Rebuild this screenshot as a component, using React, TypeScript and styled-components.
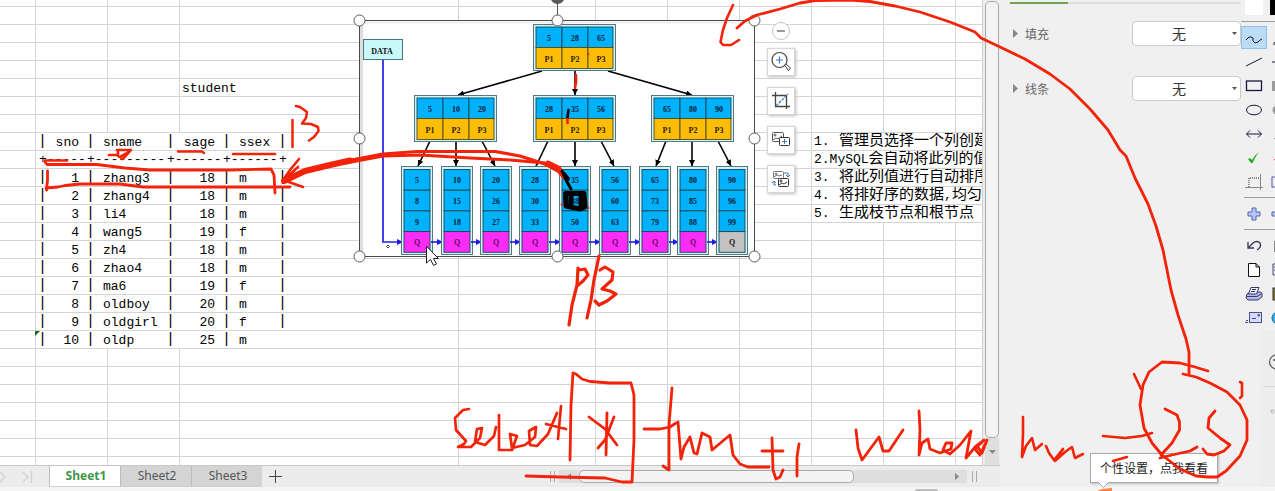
import React from "react";
import styled, { createGlobalStyle } from "styled-components";

const GlobalStyle = createGlobalStyle`
  * { box-sizing: border-box; }
  body { margin: 0; background: #f0f0f0; font-family: "Noto Sans", "Noto Sans CJK SC", sans-serif; }
  button { padding: 0; border: 0; background: none; font: inherit; color: inherit; cursor: pointer; }
  svg { display: block; }
`;

const INK = "#f22308";

const Page = styled.div`
  position: relative;
  display: flex;
  flex-direction: column;
  overflow: hidden;
`;
const Main = styled.div`
  display: flex;
`;
const Workbook = styled.main`
  flex: 1;
  min-width: 0;
`;
const SheetArea = styled.div`
  display: flex;
`;
const Sheet = styled.section`
  position: relative;
  flex: 1;
  min-width: 0;
  overflow: hidden;
  background: #fff;
  border-right: 1px solid #d0d0d0;
`;
const Grid = styled.table`
  width: 100%;
  table-layout: fixed;
  border-spacing: 0;
`;
const Row = styled.tr<{ $h?: number }>`
  height: ${(p) => p.$h ?? 18}px;
`;
const Cell = styled.td<{ $flush?: boolean; $last?: boolean }>`
  padding: 0;
  overflow: hidden;
  white-space: nowrap;
  vertical-align: top;
  font: 13px "Liberation Mono", "Noto Sans CJK SC", monospace;
  line-height: 14px;
  color: #000;
  border-right: ${(p) => (p.$flush ? 0 : 1)}px solid #d4d4d4;
  border-bottom: ${(p) => (p.$last ? 0 : 1)}px solid #d4d4d4;
`;
const CellText = styled.div`
  height: 17px;
  padding: 3px 0 0 2px;
`;
const Record = styled.div`
  display: grid;
  grid-template-columns: 48px 80px 56px 56px 9px;
  height: 17px;
  padding: 3px 0 0 2px;
`;
const Field = styled.span<{ $right?: boolean }>`
  display: flex;
  justify-content: ${(p) => (p.$right ? "space-between" : "flex-start")};
  gap: 8px;
  padding-right: 7px;
`;
const Pipe = styled.span`
  flex: none;
  width: 9px;
  font-size: 15px;
  line-height: 12px;
`;
const Rule = styled.span`
  padding-left: 1px;
  line-height: 12px;
`;
const Note = styled.div`
  display: flex;
  height: 17px;
  padding-left: 2px;
  font-size: 15px;
  line-height: 17px;
`;
const Latin = styled.span<{ $wide?: boolean }>`
  flex: none;
  min-width: ${(p) => (p.$wide ? 25 : 8)}px;
  font-size: 13px;
  line-height: 18px;
`;

const VScroll = styled.div`
  display: flex;
  flex-direction: column;
  width: 17px;
  padding: 1px 1px 0 2px;
  background: #ededed;
`;
const VThumb = styled.div`
  flex: 1;
  border: 1px solid #a9a9a9;
  border-radius: 5px;
  background: #f3f3f3;
`;
const ScrollButton = styled.button<{ $tall?: boolean }>`
  display: flex;
  align-items: center;
  justify-content: center;
  width: ${(p) => (p.$tall ? "auto" : "20px")};
  height: ${(p) => (p.$tall ? 27 : 13)}px;
  background: #dedede;
`;
const TabBar = styled.div`
  display: flex;
  height: 22px;
  background: #ececec;
  border-top: 1px solid #c9c9c9;
`;
const TabNav = styled.div`
  display: flex;
  align-items: center;
  width: 49px;
`;
const Tab = styled.button<{ $active?: boolean }>`
  width: 71px;
  height: 21px;
  padding-left: 2px;
  border-left: 1px solid #bcbcbc;
  border-bottom: 1px solid #cfcfcf;
  background: ${(p) => (p.$active ? "#fff" : "#d4d4d4")};
  color: ${(p) => (p.$active ? "#40954a" : "#555")};
  font-size: 12px;
  line-height: 20px;
  font-weight: ${(p) => (p.$active ? 700 : 400)};
`;
const AddTab = styled.button`
  width: 26px;
  display: flex;
  align-items: center;
  justify-content: center;
`;
const Spacer = styled.div`
  width: 257px;
`;
const Splitter = styled.div`
  width: 5px;
  height: 11px;
  margin: 5px 4px 0 5px;
  border-left: 1px solid #aaa;
  border-right: 1px solid #aaa;
`;
const HTrack = styled.div`
  display: flex;
  flex: 1;
  height: 13px;
  margin-top: 4px;
  background: #dedede;
`;
const HThumb = styled.div`
  width: 275px;
  border: 1px solid #a9a9a9;
  border-radius: 5px;
  background: #f3f3f3;
`;
const HRest = styled.div`
  flex: 1;
`;
const TabEnd = styled.div`
  width: 33px;
`;

const Picture = styled.svg`
  position: absolute;
  left: 350px;
  top: 0;
`;
const FloatTools = styled.div`
  position: absolute;
  left: 767px;
  top: 22px;
  display: flex;
  flex-direction: column;
  align-items: center;
  gap: 11px;
`;
const Collapse = styled.button`
  width: 18px;
  height: 18px;
  margin-bottom: -3px;
`;
const FloatButton = styled.button`
  display: flex;
  align-items: center;
  justify-content: center;
  width: 28px;
  height: 28px;
  background: #fff;
  border: 1px solid #d6d6d6;
  box-shadow: 1px 1px 3px #bbb;
`;

const Side = styled.aside`
  display: flex;
  width: 275px;
  background: #f0f0f0;
`;
const Props = styled.div`
  flex: 1;
  padding: 2px 0 0 10px;
`;
const PropTabs = styled.div`
  height: 2px;
  margin-bottom: 17px;
  background: linear-gradient(90deg, #6fa350 58px, #dedede 58px);
`;
const PropRow = styled.div`
  display: flex;
  align-items: center;
  height: 25px;
  margin-bottom: 30px;
  padding-left: 3px;
  color: #666;
  font-size: 12px;
`;
const PropLabel = styled.label`
  flex: 1;
  margin-left: 7px;
`;
const SelectBox = styled.div`
  position: relative;
  width: 109px;
`;
const Select = styled.select`
  appearance: none;
  width: 100%;
  height: 25px;
  padding: 0 15px 2px 0;
  border: 1px solid #cbcbcb;
  border-radius: 4px;
  background: #fff;
  color: #333;
  font: 14px "Noto Sans CJK SC", sans-serif;
  text-align: center;
  text-align-last: center;
`;
const Caret = styled.svg`
  position: absolute;
  right: 3px;
  top: 11px;
  pointer-events: none;
`;

const ToolColumn = styled.div`
  width: 34px;
  overflow: hidden;
`;
const ToolRow = styled.div<{ $h?: number }>`
  display: flex;
  height: ${(p) => p.$h ?? 24}px;
`;
const Tool = styled.button<{ $on?: boolean }>`
  flex: none;
  display: flex;
  align-items: center;
  justify-content: center;
  width: 26px;
  height: 100%;
  background: ${(p) => (p.$on ? "#bcdcf5" : "none")};
  border: 1px solid ${(p) => (p.$on ? "#90c0ea" : "transparent")};
`;
const Swatches = styled.div`
  display: flex;
  gap: 7px;
  height: 22px;
  padding: 0 0 7px 4px;
  margin-bottom: 4px;
  border-bottom: 1px solid #9d9d9d;
`;
const Swatch = styled.button<{ $c: string }>`
  flex: none;
  width: 18px;
  height: 15px;
  background: ${(p) => p.$c};
`;
const Divider = styled.hr`
  height: 1px;
  margin: 3px 0 4px 3px;
  border: 0;
  background: #9d9d9d;
`;
const Rail = styled.div`
  height: 157px;
  margin-left: 19px;
  background: #ededed;
`;

const StatusBar = styled.footer`
  height: 4px;
  padding: 2px 0 0 915px;
  background: #f5f5f5;
`;
const StatusGrip = styled.div`
  width: 23px;
  height: 2px;
  border-radius: 2px 2px 0 0;
  background: #bdbdbd;
`;
const Tip = styled.div`
  position: absolute;
  left: 1090px;
  top: 453px;
  width: 128px;
  height: 30px;
  padding-left: 9px;
  border: 1px solid #a4abb3;
  background: #fff;
  box-shadow: 1px 1px 2px #bbb;
  color: #222;
  font: 12px "Noto Sans CJK SC", sans-serif;
  line-height: 27px;
  white-space: nowrap;
`;
const TipTail = styled.svg`
  position: absolute;
  left: 3px;
  top: 28px;
`;
const Overlay = styled.svg`
  position: absolute;
  left: 0;
  top: 0;
  pointer-events: none;
`;

const columns = [36, 72, 72, 279, 137, 72, 72, 72, 72, 72];

const records: Record<number, string[]> = {
  8: ["sno", "sname", "sage", "ssex"],
  10: ["1", "zhang3", "18", "m"],
  11: ["2", "zhang4", "18", "m"],
  12: ["3", "li4", "18", "m"],
  13: ["4", "wang5", "19", "f"],
  14: ["5", "zh4", "18", "m"],
  15: ["6", "zhao4", "18", "m"],
  16: ["7", "ma6", "19", "f"],
  17: ["8", "oldboy", "20", "m"],
  18: ["9", "oldgirl", "20", "f"],
  19: ["10", "oldp", "25", "m"],
};
const notes: Record<number, [string, string, string?, string?]> = {
  8: ["1.", "管理员选择一个列创建"],
  9: ["2.MySQL", "会自动将此列的值"],
  10: ["3.", "将此列值进行自动排序"],
  11: ["4.", "将排好序的数据", ",", "均匀"],
  12: ["5.", "生成枝节点和根节点"],
};

function RecordLine({ n }: { n: number }) {
  if (n === 9) {
    return (
      <Record>
        {["+-----", "+---------", "+------", "+------", "+"].map((t, i) => (
          <Rule key={i}>{t}</Rule>
        ))}
      </Record>
    );
  }
  return (
    <Record>
      {records[n].map((t, i) => (
        <Field key={i} $right={i % 2 === 0}>
          <Pipe>|</Pipe>
          <span>{t}</span>
        </Field>
      ))}
      {n < 19 && <Pipe>|</Pipe>}
    </Record>
  );
}

function SheetRow({ n }: { n: number }) {
  const last = n === 26;
  const hasRecord = n >= 8 && n <= 19;
  const note = notes[n];
  return (
    <Row $h={n === 0 ? 7 : last ? 8 : 18}>
      <Cell $last={last} />
      {hasRecord ? (
        <Cell colSpan={3}><RecordLine n={n} /></Cell>
      ) : (
        <>
          <Cell $last={last} />
          <Cell $last={last} />
          <Cell $last={last}>{n === 5 && <CellText>student</CellText>}</Cell>
        </>
      )}
      {[0, 1, 2, 3].map((i) => <Cell key={i} $last={last} />)}
      {note ? (
        <Cell colSpan={3} $flush>
          <Note>
            <Latin $wide>{note[0]}</Latin>
            <span>{note[1]}</span>
            {note[2] && <Latin>{note[2]}</Latin>}
            {note[3] && <span>{note[3]}</span>}
          </Note>
        </Cell>
      ) : (
        <>
          <Cell $last={last} />
          <Cell $last={last} />
          <Cell $last={last} $flush />
        </>
      )}
    </Row>
  );
}

const branches = [
  { x: 533, y: 24, keys: ["5", "28", "65"] },
  { x: 414, y: 95, keys: ["5", "10", "20"] },
  { x: 533, y: 95, keys: ["28", "35", "56"] },
  { x: 651, y: 95, keys: ["65", "80", "90"] },
];
const leaves = [
  { x: 401, keys: ["5", "8", "9"] },
  { x: 441, keys: ["10", "15", "18"] },
  { x: 480, keys: ["20", "26", "27"] },
  { x: 519, keys: ["28", "30", "33"] },
  { x: 559, keys: ["35", "38", "50"] },
  { x: 599, keys: ["56", "60", "63"] },
  { x: 639, keys: ["65", "73", "79"] },
  { x: 677, keys: ["80", "85", "88"] },
  { x: 716, keys: ["90", "96", "99"] },
];
const links = [
  [542, 71, 458, 95], [575, 71, 575, 95], [608, 71, 692, 95],
  [430, 141, 418, 166], [456, 141, 456, 166], [482, 141, 495, 166],
  [548, 141, 536, 166], [575, 141, 575, 166], [601, 141, 614, 166],
  [666, 141, 656, 166], [692, 141, 692, 166], [718, 141, 731, 166],
];
const handles = [
  [359.5, 20.5], [557.5, 20.5], [754.5, 20.5], [359.5, 138.5],
  [754.5, 138.5], [359.5, 256.5], [557.5, 256.5], [754.5, 256.5],
];

function TreePicture() {
  return (
    <Picture width="412" height="266" viewBox="350 0 412 266" fontFamily="Liberation Serif, serif" fontWeight="700" fontSize="8" textAnchor="middle">
      <defs>
        <marker id="tip" viewBox="0 0 6 6" refX="6" refY="3" markerWidth="6" markerHeight="6" markerUnits="userSpaceOnUse" orient="auto"><path d="M0 0L6 3L0 6z" /></marker>
        <marker id="blueTip" viewBox="0 0 6 6" refX="6" refY="3" markerWidth="6" markerHeight="6" markerUnits="userSpaceOnUse" orient="auto"><path d="M0 0L6 3L0 6z" fill="#1c1ce6" /></marker>
      </defs>
      <rect x="359.5" y="20.5" width="395" height="236" fill="#fff" />
      <path d="M361.5 21V256" stroke="#dedede" strokeWidth="3" />
      <path d="M360 22.5H754" stroke="#eee" strokeWidth="2" />
      <rect x="363.5" y="39.5" width="39" height="20" fill="#c9f8f8" stroke="#4a7480" />
      <text x="382" y="53.5" fill="#111">DATA</text>
      <path d="M383 60V242H403" fill="none" stroke="#2222e2" strokeWidth="1.7" markerEnd="url(#blueTip)" />
      {links.map(([a, b, c, d], i) => (
        <path key={i} d={`M${a} ${b}L${c} ${d}`} stroke="#000" strokeWidth="1.6" markerEnd="url(#tip)" />
      ))}
      {branches.map((n, k) => (
        <g key={k}>
          <rect x={n.x + 0.5} y={n.y + 0.5} width="82" height="46" fill="#d0f5f8" stroke="#547780" />
          {n.keys.map((key, i) => (
            <g key={i}>
              <rect x={n.x + 3 + i * 26} y={n.y + 3} width={i === 2 ? 25 : 26} height="20.5" fill="#00b2fc" stroke="#164558" strokeWidth=".9" />
              <rect x={n.x + 3 + i * 26} y={n.y + 23.5} width={i === 2 ? 25 : 26} height="21" fill="#fdbc05" stroke="#4c4a22" strokeWidth=".9" />
              <text x={n.x + 16 + i * 26} y={n.y + 16.5} fill="#0a2030">{key}</text>
              <text x={n.x + 16 + i * 26} y={n.y + 37.5} fill="#2c2006">{"P" + (i + 1)}</text>
            </g>
          ))}
        </g>
      ))}
      {leaves.map((n, k) => (
        <g key={k}>
          <rect x={n.x + 0.5} y="166.5" width="31" height="88" fill="#d0f5f8" stroke="#547780" />
          {[...n.keys, "Q"].map((key, i) => (
            <g key={i}>
              <rect x={n.x + 3} y={169.5 + i * 20.7} width="26" height="20.7" fill={i < 3 ? "#00b2fc" : k === 8 ? "#c2c2c2" : "#fb2cf5"} stroke="#164558" strokeWidth=".9" />
              <text x={n.x + 16} y={183 + i * 20.8} fill={i < 3 ? "#0a2030" : k === 8 ? "#222" : "#641068"}>{key}</text>
            </g>
          ))}
          {k < 8 && <path d={`M${n.x + 30} 242H${leaves[k + 1].x + 2}`} stroke="#1c1ce6" strokeWidth="1.6" markerEnd="url(#blueTip)" />}
        </g>
      ))}
      <path d="M388 245l1.500 1.500l-1.500 1.500l-1.500-1.500z" fill="none" stroke="#111" strokeWidth=".8" />
      <rect x="359.500" y="20.500" width="395" height="236" fill="none" stroke="#4a4a4a" />
      <path d="M557.500 0V20" stroke="#555" />
      <circle cx="557.500" cy="-3" r="7" fill="#595959" />
      {handles.map(([x, y], i) => (
        <circle key={i} cx={x} cy={y} r="5.500" fill="#fff" stroke="#5a5a5a" />
      ))}
    </Picture>
  );
}

const inkStrokes: [string, number][] = [
  ["M292.500 120V147", 2.500],
  ["M296 106L300 107L307 112L306 118L302 123.500L311 124L318 127L318.500 131L314 137L309 140.500", 2.500],
  ["M109 155H118M117 150H131L123 159L118 156V150M120 157L129 152", 2.600],
  ["M178 151.500H202L204 153", 2.500],
  ["M233 154H275", 2.600],
  ["M45 160.500H67", 2.500],
  ["M45 162L47 164.500H97L125 168L150 170H230L271 169L274 175L275 193", 2.800],
  ["M47.500 171V180L46.500 190", 2.800],
  ["M46 188L58 187L65 185.500L80 184H120L143 187H290", 2.800],
  ["M299 159L290 170L283 180L303 187M298 167L286 178", 2.600],
  ["M284 181L305 171L330 165L350 160.500", 6],
  ["M346 161L383 154L417 151.500H495L520 156L545 164L558 171L564 178", 3.200],
  ["M346 163L383 156L420 155L470 158L510 160L545 163L560 169L566 178", 3],
  ["M548 163L558 168L564 175", 5],
  ["M576 75V82L575 88M567.500 117V123", 2.600],
  ["M588 54h.5", 2],
  ["M578 268L577 285L572 305L569 325M579 270L585 269L588 275L583 281L577 286", 3.200],
  ["M599 256L594 280L591 300L587 318", 3.200],
  ["M600 270L605 267L613 272L612 280L602 289L610 291L616 294L607 301L599 305L595 301", 3.200],
  ["M733 5L727 18L723 30L720.500 42L723 45L731 45L739 40", 2.600],
  ["M737 28L745 21L757 15L780 9L800 3L815 .5L850 0L870 1.500L895 6L920 12L950 22L975 32L981 38L1000 47L1025 59L1050 74L1070 89L1090 109L1108 130L1120 150L1126 156L1135 178L1148 204L1156 226L1163 250L1171 290L1178 315L1186 339L1189 352V374", 2.800],
  ["M1208 371L1195 367L1180 363L1162 362L1149 372L1143 385L1140 405L1144 428L1152 443L1162 455L1180 469L1196 476L1208 477H1217L1226 471L1240 456L1247 440V420L1240 405L1227 392L1210 383L1196 377L1183 374", 2.800],
  ["M1134 374L1141 389M1240 382L1242 383V396L1240 398", 2.600],
  ["M1165 409L1177 415L1179.500 422V430L1172 443L1161 455M1160 458L1172 455L1190 451L1197 447", 2.800],
  ["M1215 411L1209 418L1208 428L1220 438L1230 445L1224 451L1214 455L1207 454L1203 449", 2.800],
  ["M1103 436L1125 438L1142 436L1152 433M1113 461L1127 457", 2.600],
  ["M1023 417V434L1022 457L1026 446L1032 438L1035 450L1042 444M1046 446L1049 453L1054 460L1063 449L1055 461L1065 452L1072 447L1075 458L1083 454", 2.600],
  ["M856 430L858 448L862 460L879 437L883 451H889L903 430", 2.800],
  ["M919 411L920 430L919 455L922 443L928 439L930 449L940 453L951 449L952 443L946 443L943 450L950 454L960 445L971 431L966 458L976 446L984 440L975 449L980 455L987 440L982 453L977 446", 2.800],
  ["M762 451H783M772 438L773 470L776 479L780 477L783 470M799 444L797 457V476", 2.800],
  ["M644 429H660L670 427L676 423M672 388L669 425V470L663 466", 2.800],
  ["M678 422L681 459L684 447L690 437L694 453L697 454L702 433L710 437L712 450L730 435L733 455L740 464L748 467H769", 2.800],
  ["M570 460L571 405L573 373L576 374L582 379L590 381.500L610 383H631L634 395V440L632 482H622L605 478L560 477L526 476", 2.800],
  ["M589 417L605 429L617 445M614 417L605 440L598 448M607 413L606 455", 2.800],
  ["M469 409L463 410L455 418L456 430L466 441L464 444L458 447H471L480 438L482 428L477 429L475 442L485 445L494 436L496 427M499 415V450H512L517 436L510 434L512 448L525 445L535 437L536 427L529 431L530 445L537 446L548 434L557 413M561 406L558 439M546 424L566 429", 2.700],
];

function Ink() {
  return (
    <Overlay width="1275" height="491" viewBox="0 0 1275 491" fill="none" stroke={INK} strokeLinecap="round" strokeLinejoin="round" aria-hidden="true">
      <path d="M35 331h5l-5 5z" fill="#17691e" stroke="none" />
      {inkStrokes.map(([d, w], i) => <path key={i} d={d} strokeWidth={w} />)}
      <g stroke="#000">
        <path d="M562 171L566 180L571 189" strokeWidth="3" />
        <path d="M564 174L568 179" strokeWidth="4" />
        <path d="M565.500 193.500H584L585 207L580 209L566 206zM571 196V206M581 196V207" strokeWidth="5" />
        <path d="M568.500 110L567.500 117" strokeWidth="2.600" />
      </g>
      <path d="M561.500 204.500h1M588 208h.5" strokeWidth="2" />
      <path d="M426.500 246.500V263L430.500 259.500L433.500 265.500L436.500 264L433.500 258.500H438z" fill="#fff" stroke="#222" strokeWidth="1" />
    </Overlay>
  );
}

type Glyph = { name: string; art: React.ReactNode; side: React.ReactNode; h?: number };
const navy = "#17173f";
const drawTools: Glyph[] = [
  { name: "Freehand", h: 23, art: <path d="M1 11L4 8H6L8 9V12L10 14L13 13L15 11L17 10" stroke={navy} />, side: <path d="M3 14L6 11M2 15H6" stroke="#222" /> },
  { name: "Line", h: 25, art: <path d="M1 13L17 5" stroke={navy} />, side: <path d="M1 9H12" stroke={navy} /> },
  { name: "Rectangle", art: <rect x="1.500" y="4" width="15" height="9.500" stroke={navy} strokeWidth="1.300" />, side: <rect x="1" y="4" width="12" height="10" fill="#9b9b9b" /> },
  { name: "Ellipse", art: <ellipse cx="9" cy="9" rx="7.500" ry="4.800" stroke={navy} />, side: <circle cx="6" cy="9" r="4.500" fill="#9b9b9b" /> },
  { name: "Arrow", art: <path d="M1.500 9H16.500M5 5.500L1.500 9L5 12.500M13 5.500L16.500 9L13 12.500" stroke={navy} />, side: <path d="M3 14L7 10V14z" fill="#222" /> },
  { name: "Check", art: <path d="M3 10L5 9L7 11Q10 6 14 3Q10 8 7.500 14H6z" fill="#22ad22" />, side: <path d="M3 11L7 8" stroke="#f33" /> },
  { name: "Crop area", art: <><path d="M4 14V5H14" stroke="#222" strokeDasharray="1 1" /><path d="M15.500 1V17M0 14.500H18" stroke="#888" /></>, side: <rect x="1" y="4" width="9" height="10" stroke="#5353a8" /> },
];
const fileTools: Glyph[] = [
  { name: "Undo", art: <path d="M3 5V11H9M4 10L8 6Q12 3 15 6Q17 10 12 13" stroke="#333354" strokeWidth="1.300" />, side: <path d="M3 5H10M4 6V15H10" stroke="#222" /> },
  { name: "New page", art: <path d="M3.500 2.500H11L14.500 6V15.500H3.500zM11 2.500V6H14.500" fill="#fff" stroke="#111" />, side: <path d="M2 3H10V14H2zM3 6H9M3 9H9" stroke="#444470" /> },
  { name: "Print", art: <><path d="M2 9L5 7H15L17 8V12L13 15H3L1 13z" fill="#b5b8ea" stroke="#373b6a" /><path d="M6 2.500H14L11.500 9H3.500z" fill="#eef" stroke="#373b6a" /><path d="M7 4.500H11M6 6.500H10M2 11.500H12L16 9" stroke="#373b6a" /></>, side: <rect x="2" y="3" width="10" height="12" fill="#77703c" stroke="#333" /> },
  { name: "Mail", art: <><rect x="4.500" y="3.500" width="12" height="10" fill="#d8daff" stroke="#46508c" /><path d="M7 9.500H11M0 13.500H3M1 11.500H3M13 5.500H14.500V7H13z" stroke="#46508c" /></>, side: <circle cx="7" cy="9" r="6" fill="#32b5ef" stroke="#19628c" /> },
];

function ToolRows({ tools }: { tools: Glyph[] }) {
  return (
    <>
      {tools.map((t) => (
        <ToolRow key={t.name} $h={t.h}>
          <Tool $on={t.name === "Freehand"} aria-label={t.name}>
            <svg width="18" height="18" viewBox="0 0 18 18" fill="none">{t.art}</svg>
          </Tool>
          <Tool aria-label={t.name + " variant"}>
            <svg width="18" height="18" viewBox="0 0 18 18" fill="none">{t.side}</svg>
          </Tool>
        </ToolRow>
      ))}
    </>
  );
}

function Property({ id, label }: { id: string; label: string }) {
  return (
    <PropRow>
      <svg width="5" height="9"><path d="M0 0L5 4.500L0 9z" fill="#888" /></svg>
      <PropLabel htmlFor={id}>{label}</PropLabel>
      <SelectBox>
        <Select id={id}><option>无</option></Select>
        <Caret width="7" height="4"><path d="M1 0H6L3.500 3z" fill="#555" /></Caret>
      </SelectBox>
    </PropRow>
  );
}

const Photo = ({ x, y, w, h }: { x: number; y: number; w: number; h: number }) => (
  <g transform={`translate(${x} ${y})`}>
    <rect x=".5" y=".5" width={w} height={h} rx="1" fill="#fff" />
    <circle cx="3" cy="3" r="1" />
    <path d={`M1 ${h - 1}L4 ${h - 3}L6 ${h - 2}L${w - 1} 4`} />
  </g>
);

export default function App() {
  return (
    <Page>
      <GlobalStyle />
      <Main>
        <Workbook>
          <SheetArea>
            <Sheet>
              <Grid>
                <colgroup>
                  {columns.map((w, i) => <col key={i} width={w} />)}
                  <col />
                </colgroup>
                <tbody>
                  {Array.from({ length: 27 }, (_, n) => <SheetRow key={n} n={n} />)}
                </tbody>
              </Grid>
              <TreePicture />
              <FloatTools>
                <Collapse aria-label="Collapse">
                  <svg width="18" height="18" fill="none"><circle cx="9" cy="9" r="8.500" fill="#fff" stroke="#c4c4c4" /><path d="M5 9H13" stroke="#777" strokeWidth="1.500" /></svg>
                </Collapse>
                <FloatButton aria-label="Zoom in">
                  <svg width="22" height="22" fill="none" stroke="#444"><circle cx="9.500" cy="9" r="7.500" strokeWidth="1.200" /><path d="M14.500 14L16 13L20.500 17L18.500 19.500z" fill="#fff" /><path d="M6 9H13M9.500 5.500V12.500" stroke="#3d7cc4" strokeWidth="1.200" /></svg>
                </FloatButton>
                <FloatButton aria-label="Crop">
                  <svg width="20" height="20" fill="none" stroke="#444" strokeWidth="1.300"><path d="M1 4.500H15.500V18M4.500 1V15.500H19" /><path d="M5 15L17 3" stroke="#3d7cc4" strokeDasharray="3 1" /></svg>
                </FloatButton>
                <FloatButton aria-label="Add picture">
                  <svg width="22" height="20" fill="none" stroke="#555"><Photo x={2} y={2} w={11} h={9} /><rect x="9.500" y="7.500" width="10" height="8" rx="1" fill="#fff" stroke="#333" /><path d="M12 11.500H17M14.500 9V14" stroke="#3d7cc4" /></svg>
                </FloatButton>
                <FloatButton aria-label="Replace picture">
                  <svg width="22" height="20" fill="none" stroke="#777"><Photo x={3} y={2} w={10} h={7} /><g stroke="#333"><Photo x={8} y={9} w={10} h={8} /></g><path d="M14 4H18V8M16 6L18 8L20 6M6 16H4V12M2 14L4 12L6 14" stroke="#3d7cc4" /></svg>
                </FloatButton>
              </FloatTools>
            </Sheet>
            <VScroll>
              <VThumb />
              <ScrollButton $tall aria-label="Scroll down"><svg width="7" height="4"><path d="M0 0H7L3.500 4z" fill="#888" /></svg></ScrollButton>
            </VScroll>
          </SheetArea>
          <TabBar>
            <TabNav>
              <svg width="49" height="20" fill="none" stroke="#d2d2d2" strokeWidth="1.300"><path d="M0 5L5 10L0 15M23 5L28 10L23 15M31.500 4V16" /></svg>
            </TabNav>
            <Tab $active>Sheet1</Tab>
            <Tab>Sheet2</Tab>
            <Tab>Sheet3</Tab>
            <AddTab aria-label="Add sheet"><svg width="13" height="13"><path d="M0 6.500H13M6.500 0V13" stroke="#444" /></svg></AddTab>
            <Spacer />
            <Splitter />
            <HTrack>
              <ScrollButton aria-label="Scroll left"><svg width="4" height="7"><path d="M4 0V7L0 3.500z" fill="#888" /></svg></ScrollButton>
              <HThumb />
              <HRest />
              <ScrollButton aria-label="Scroll right"><svg width="4" height="7"><path d="M0 0V7L4 3.500z" fill="#888" /></svg></ScrollButton>
            </HTrack>
            <TabEnd><Splitter /></TabEnd>
          </TabBar>
        </Workbook>
        <Side>
          <Props>
            <PropTabs />
            <Property id="fill" label="填充" />
            <Property id="line" label="线条" />
          </Props>
          <ToolColumn>
            <Swatches><Swatch $c="#fff" aria-label="White" /><Swatch $c="#000" aria-label="Black" /></Swatches>
            <ToolRows tools={drawTools} />
            <Divider />
            <ToolRows tools={[{ name: "Add", art: <path d="M7 3H11V7H15V11H11V15H7V11H3V7H7z" fill="#b8c4f3" stroke="#5366ae" />, side: <path d="M1 7H8V11H1z" fill="#b8c4f3" stroke="#5366ae" /> }]} />
            <Divider />
            <ToolRows tools={fileTools} />
            <Rail>
              <svg width="15" height="157" fill="none"><circle cx="16.500" cy="32" r="7" stroke="#555" strokeWidth="1.200" /><circle cx="14" cy="30" r="1" fill="#555" /><path d="M3 56.500H15" stroke="#d9d9d9" /><circle cx="12.500" cy="81.500" r="1.500" stroke="#aaa" /></svg>
            </Rail>
          </ToolColumn>
        </Side>
      </Main>
      <StatusBar><StatusGrip /></StatusBar>
      <Tip role="tooltip">
        个性设置，点我看看
        <TipTail width="22" height="10"><path d="M4 0L9.500 5.500L15 0" fill="#fff" stroke="#a4abb3" /><path d="M3 9L8 7L18 6V9z" fill="#ff8142" /></TipTail>
      </Tip>
      <Ink />
    </Page>
  );
}
